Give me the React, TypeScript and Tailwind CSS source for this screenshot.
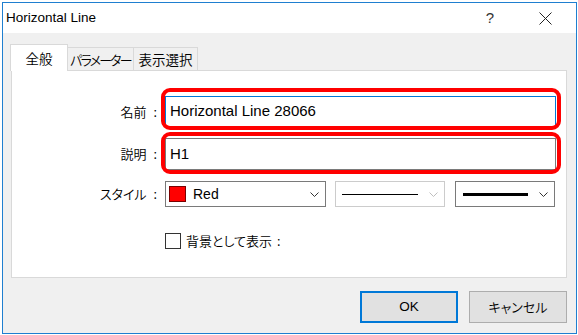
import React from "react";

const FONT = { fontFamily: '"Liberation Sans", "Noto Sans CJK JP", sans-serif' };
const JP = { fontFamily: '"Noto Sans CJK JP", sans-serif', fontFeatureSettings: '"palt"' };

function Chevron({ color = "#333333" }: { color?: string }) {
    return (
        <svg width="9" height="5" viewBox="0 0 9 5" className="shrink-0">
            <path d="M0.5 0.5 L4.5 4.5 L8.5 0.5" fill="none" stroke={color} strokeWidth="1" />
        </svg>
    );
}

function Label({ text }: { text: string }) {
    return (
        <div className="flex w-[146px] shrink-0 items-center justify-end pr-[1px] text-[13px] font-[350] text-black" style={JP}>
            <span>{text}</span>
            <span className="ml-[7px]">:</span>
        </div>
    );
}

export default function App() {
    return (
        <div className="h-[335px] w-[578px] bg-white pl-[2px] pt-[2px]" style={FONT}>
            <div className="flex h-[332px] w-[575px] flex-col border border-[#1f7fd0] bg-[#f0f0f0]">
                {/* title bar */}
                <div className="flex h-[30px] shrink-0 items-center bg-white pl-[3px]">
                    <span className="text-[13.5px] text-black">Horizontal Line</span>
                    <span className="ml-auto mr-[45px] text-[15px] text-[#333]">?</span>
                    <svg width="13" height="13" viewBox="0 0 13 13" className="mr-[24px]">
                        <path d="M0.5 0.5 L12.5 12.5 M12.5 0.5 L0.5 12.5" stroke="#222" strokeWidth="1" />
                    </svg>
                </div>

                {/* body */}
                <div className="flex flex-1 flex-col pl-[8px] pr-[9px] pt-[11px]">
                    <div className="relative z-10 -mb-px flex items-end">
                        <div className="-ml-px flex h-[27px] w-[58px] items-center justify-center border border-b-0 border-[#d9d9d9] bg-white text-[13.5px] font-[350]" style={JP}>
                            全般
                        </div>
                        <div className="flex h-[24px] w-[66px] items-center justify-center whitespace-nowrap border-r border-t border-[#d9d9d9] text-[13px] font-[350] tracking-[-0.14em]" style={JP}>
                            パラメーター
                        </div>
                        <div className="flex h-[24px] w-[64px] items-center justify-center whitespace-nowrap border-r border-t border-[#d9d9d9] text-[13.5px] font-[350]" style={JP}>
                            表示選択
                        </div>
                    </div>

                    <div className="flex h-[208px] flex-col border border-[#d9d9d9] bg-white pt-[25px]">
                        <div className="flex items-center">
                            <Label text="名前" />
                            <div className="relative ml-[7px]">
                                <div className="flex h-[31px] w-[391px] items-center border border-[#0078d7] pl-[4px] text-[15px] text-black">
                                    Horizontal Line 28066
                                </div>
                                <div className="pointer-events-none absolute -bottom-[3px] -left-[4px] -right-[5px] -top-[8px] rounded-[9px] border-4 border-[#ff0000]" />
                            </div>
                        </div>

                        <div className="mt-[11px] flex items-center">
                            <Label text="説明" />
                            <div className="relative ml-[7px]">
                                <div className="flex h-[32px] w-[391px] items-center border border-[#7a7a7a] pl-[4px] text-[15px] text-black">
                                    H1
                                </div>
                                <div className="pointer-events-none absolute -bottom-[4px] -left-[4px] -right-[5px] -top-[6px] rounded-[9px] border-4 border-[#ff0000]" />
                            </div>
                        </div>

                        <div className="mt-[11px] flex items-center">
                            <Label text="スタイル" />
                            <div className="ml-[7px] flex h-[26px] w-[161px] items-center border border-[#7a7a7a] pl-[3px] pr-[6px]">
                                <div className="h-[16px] w-[17px] border border-[#7a0000] bg-[#ff0000]" />
                                <span className="ml-[7px] text-[14px] text-black">Red</span>
                                <span className="ml-auto">
                                    <Chevron />
                                </span>
                            </div>
                            <div className="ml-[9px] flex h-[26px] w-[110px] items-center border border-[#cccccc] pl-[6px] pr-[6px]">
                                <div className="h-px w-[76px] bg-black" />
                                <span className="ml-auto">
                                    <Chevron color="#bfbfbf" />
                                </span>
                            </div>
                            <div className="ml-[10px] flex h-[26px] w-[100px] items-center border border-[#7a7a7a] pl-[7px] pr-[6px]">
                                <div className="h-[3px] w-[65px] bg-black" />
                                <span className="ml-auto">
                                    <Chevron />
                                </span>
                            </div>
                        </div>

                        <div className="mt-[24px] flex items-center pl-[153px]">
                            <div className="h-[16px] w-[16px] border border-[#333333] bg-white" />
                            <span className="ml-[5px] text-[13px] font-[350] text-black" style={JP}>
                                背景として表示
                            </span>
                            <span className="ml-[5px] text-[13px] font-[350] text-black" style={JP}>
                                :
                            </span>
                        </div>
                    </div>

                    <div className="mt-[13px] flex justify-end gap-[11px]">
                        <button className="flex h-[32px] w-[98px] items-center justify-center border-2 border-[#0078d7] bg-[#e1e1e1] text-[13.5px] text-black">
                            OK
                        </button>
                        <button className="flex h-[32px] w-[98px] items-center justify-center border border-[#adadad] bg-[#e1e1e1] text-[13px] font-[350] text-black" style={JP}>
                            キャンセル
                        </button>
                    </div>
                </div>
            </div>
        </div>
    );
}
